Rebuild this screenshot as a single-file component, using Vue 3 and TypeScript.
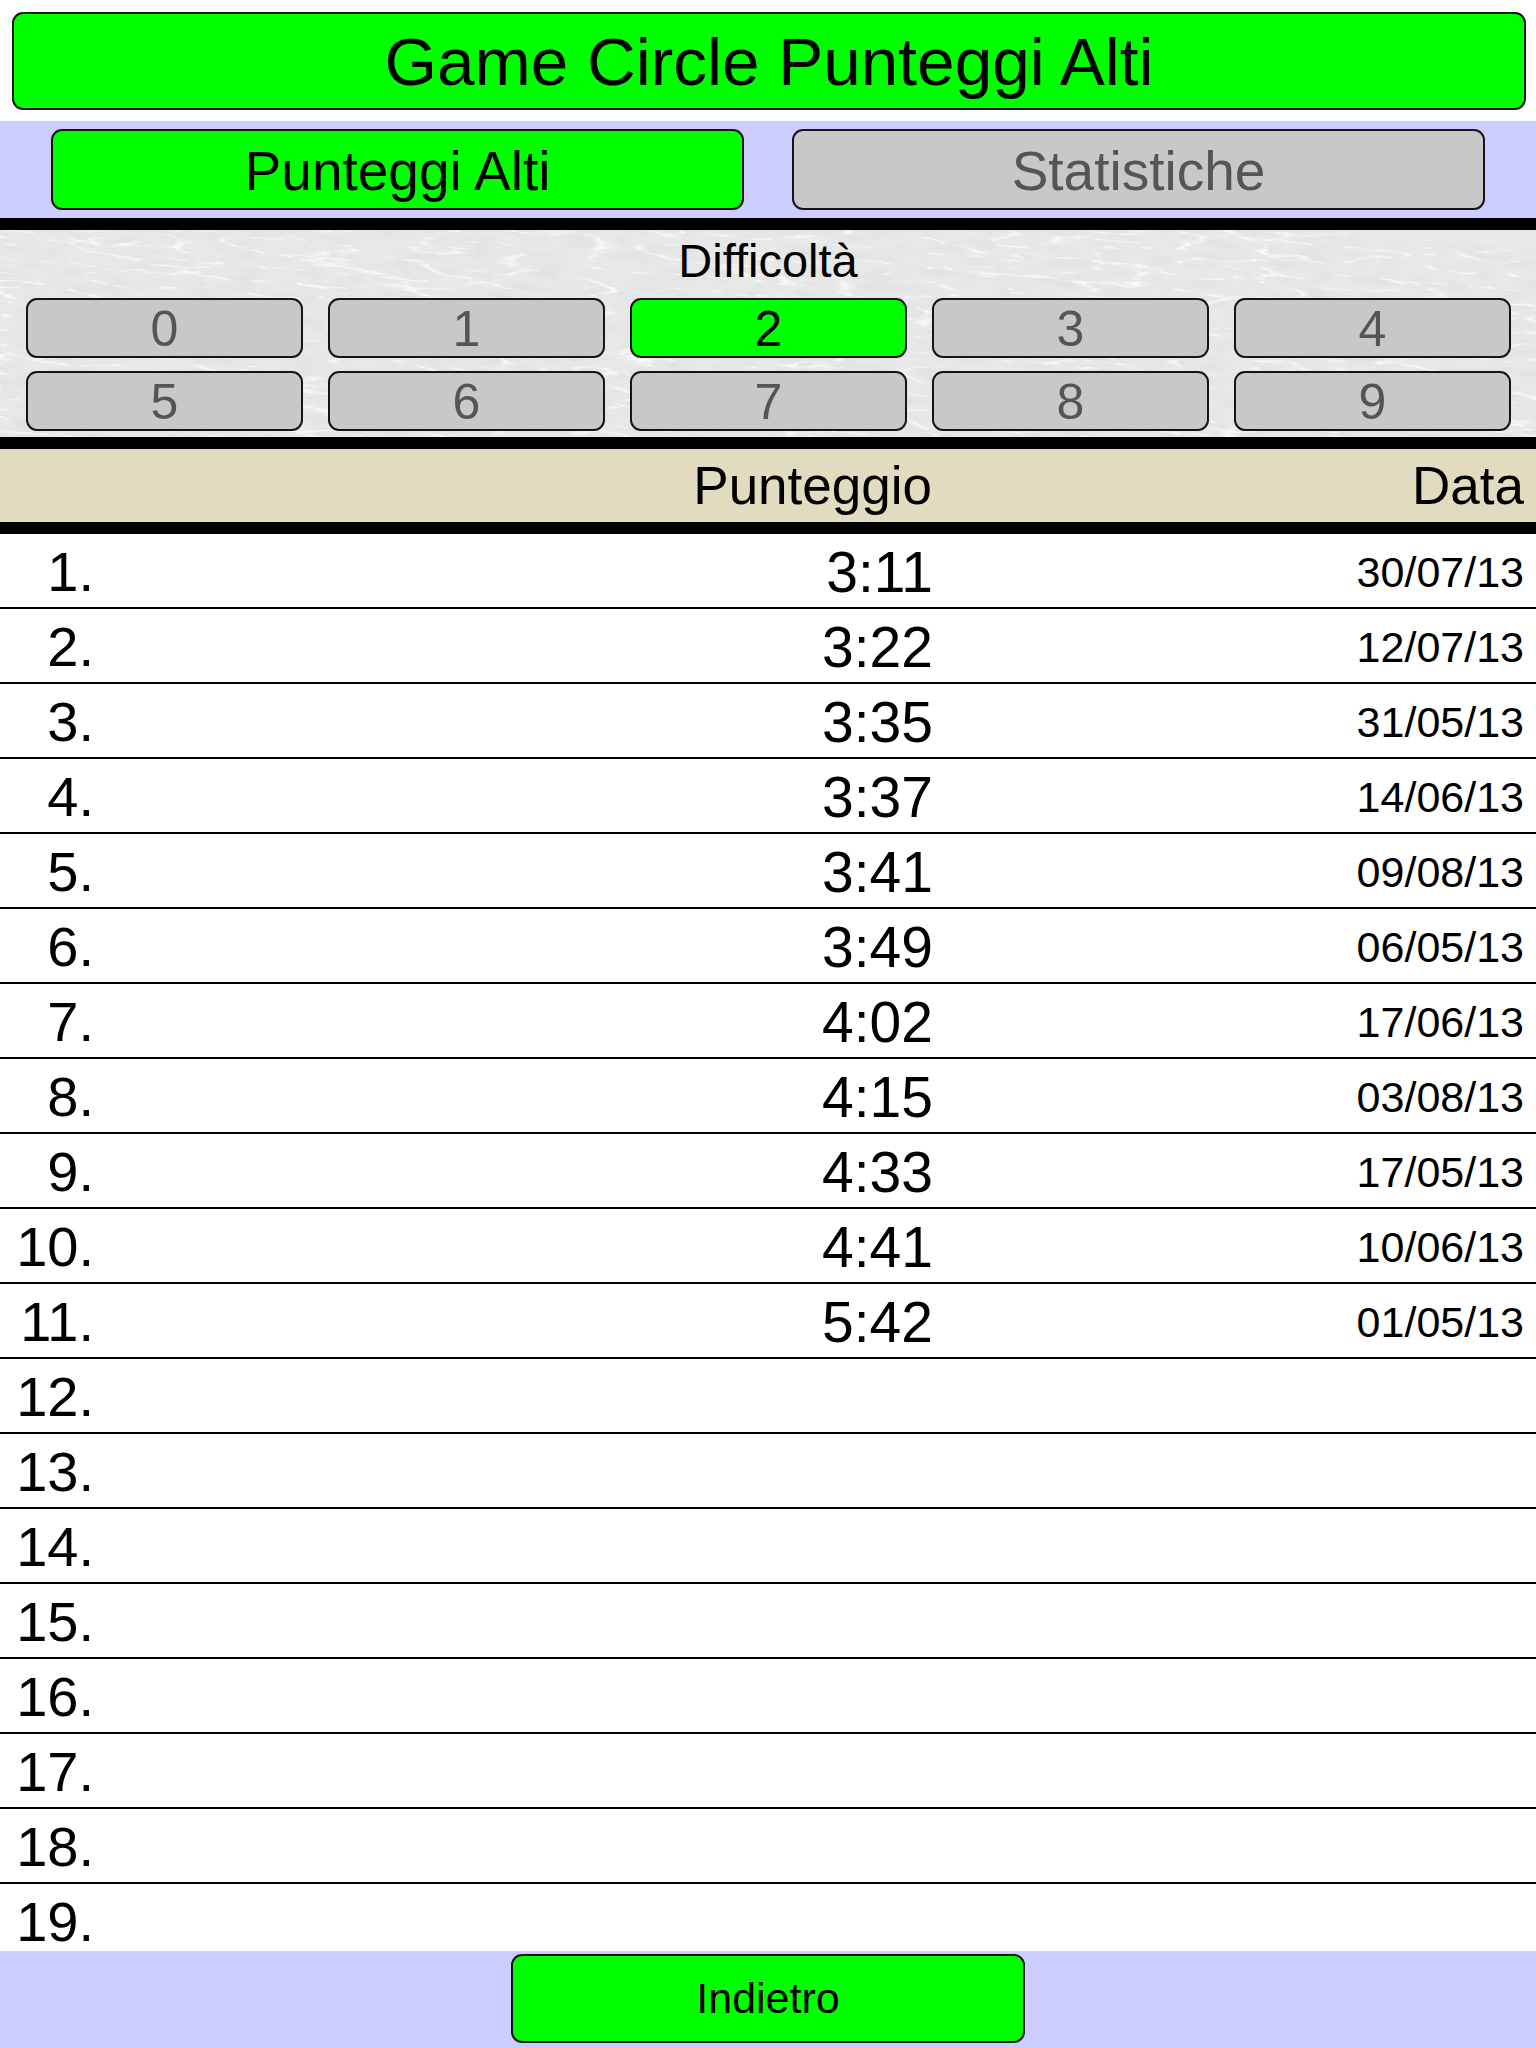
<script setup lang="ts">
const levels: number[] = [0, 1, 2, 3, 4, 5, 6, 7, 8, 9];
const activeLevel = 2;
const scores: [string, string][] = [
  ['3:11', '30/07/13'],
  ['3:22', '12/07/13'],
  ['3:35', '31/05/13'],
  ['3:37', '14/06/13'],
  ['3:41', '09/08/13'],
  ['3:49', '06/05/13'],
  ['4:02', '17/06/13'],
  ['4:15', '03/08/13'],
  ['4:33', '17/05/13'],
  ['4:41', '10/06/13'],
  ['5:42', '01/05/13'],
];
const rows = Array.from({ length: 19 }, (_, i) => ({
  rank: `${i + 1}.`,
  score: scores[i]?.[0] ?? '',
  date: scores[i]?.[1] ?? '',
}));
</script>

<template>
  <div class="page">
    <header class="title-wrap">
      <div class="btn title on">Game Circle Punteggi Alti</div>
    </header>
    <nav class="tabs">
      <div class="btn tab on">Punteggi Alti</div>
      <div class="btn tab off">Statistiche</div>
    </nav>
    <section class="difficulty">
      <svg class="texture" width="1536" height="207" aria-hidden="true">
        <filter id="marble-a" x="0" y="0" width="100%" height="100%">
          <feTurbulence type="turbulence" baseFrequency="0.012 0.07" numOctaves="4" seed="23" />
          <feColorMatrix
            type="matrix"
            values="0 0 0 0 1  0 0 0 0 1  0 0 0 0 1  -5 0 0 0 1"
          />
        </filter>
        <filter id="marble-b" x="0" y="0" width="100%" height="100%">
          <feTurbulence type="fractalNoise" baseFrequency="0.03 0.1" numOctaves="4" seed="4" />
          <feColorMatrix
            type="matrix"
            values="0 0 0 0 0.76  0 0 0 0 0.76  0 0 0 0 0.76  2.4 0 0 0 -0.95"
          />
        </filter>
        <rect width="1536" height="207" fill="#e8e8e8" />
        <g transform="translate(-60 -120) rotate(5)">
          <rect width="1700" height="500" filter="url(#marble-b)" />
          <rect width="1700" height="500" filter="url(#marble-a)" />
        </g>
      </svg>
      <div class="diff-label">Difficoltà</div>
      <div class="diff-grid">
        <div
          v-for="n in levels"
          :key="n"
          class="btn level"
          :class="n === activeLevel ? 'on' : 'off'"
        >{{ n }}</div>
      </div>
    </section>
    <div class="table-head">
      <span class="col-score">Punteggio</span>
      <span class="col-date">Data</span>
    </div>
    <div class="table-body">
      <div v-for="r in rows" :key="r.rank" class="row">
        <span class="rank">{{ r.rank }}</span>
        <span class="score">{{ r.score }}</span>
        <span class="date">{{ r.date }}</span>
      </div>
    </div>
    <footer class="footer">
      <div class="btn back on">Indietro</div>
    </footer>
  </div>
</template>

<style>
html, body { margin: 0; background: #fff; }
</style>

<style scoped>
.page {
  width: 1536px;
  height: 2048px;
  overflow: hidden;
  display: flex;
  flex-direction: column;
  background: #fff;
  color: #000;
  font-family: "Liberation Sans", Arial, sans-serif;
}
.btn {
  box-sizing: border-box;
  display: flex;
  align-items: center;
  justify-content: center;
  border: 2px solid #151515;
  border-radius: 11px;
}
.on { background: #00ff00; color: #000; }
.off { background: #c8c8c8; color: #555; }
.title-wrap {
  height: 121px;
  box-sizing: border-box;
  padding: 12px 10px 11px 12px;
}
.title { height: 98px; font-size: 67.5px; }
.tabs {
  height: 97px;
  box-sizing: border-box;
  padding: 8px 51px;
  display: flex;
  justify-content: space-between;
  background: #ccccff;
}
.tab { width: 693px; height: 81px; padding-top: 2px; font-size: 55px; }
.difficulty {
  position: relative;
  height: 219px;
  box-sizing: border-box;
  border-top: 12px solid #000;
  overflow: hidden;
}
.texture { position: absolute; left: 0; top: 0; }
.diff-label {
  position: relative;
  height: 56px;
  padding-top: 1px;
  line-height: 60px;
  text-align: center;
  font-size: 47px;
  margin-bottom: 11px;
}
.diff-grid {
  position: relative;
  display: grid;
  grid-template-columns: repeat(5, 277px);
  column-gap: 25px;
  row-gap: 13px;
  padding-left: 26px;
}
.level { height: 60px; padding-top: 2px; font-size: 50px; }
.table-head {
  box-sizing: border-box;
  height: 97px;
  border-top: 12px solid #000;
  border-bottom: 12px solid #000;
  background: #e1dbbf;
  display: flex;
  align-items: center;
  font-size: 53px;
}
.col-score { width: 932px; text-align: right; }
.col-date { width: 592px; text-align: right; }
.table-body { flex: 1; min-height: 0; }
.row {
  box-sizing: border-box;
  height: 75px;
  padding-top: 3px;
  display: flex;
  align-items: center;
  border-bottom: 2px solid #000;
  line-height: 56px;
}
.row:last-child { height: 67px; padding-top: 9px; border-bottom: 0; }
.rank { width: 94px; text-align: right; font-size: 56px; }
.score { width: 839px; text-align: right; font-size: 57px; }
.date { width: 591px; text-align: right; font-size: 43px; }
.footer {
  height: 97px;
  box-sizing: border-box;
  padding-top: 3px;
  display: flex;
  justify-content: center;
  background: #ccccff;
}
.back { width: 514px; height: 89px; font-size: 43px; }
</style>
